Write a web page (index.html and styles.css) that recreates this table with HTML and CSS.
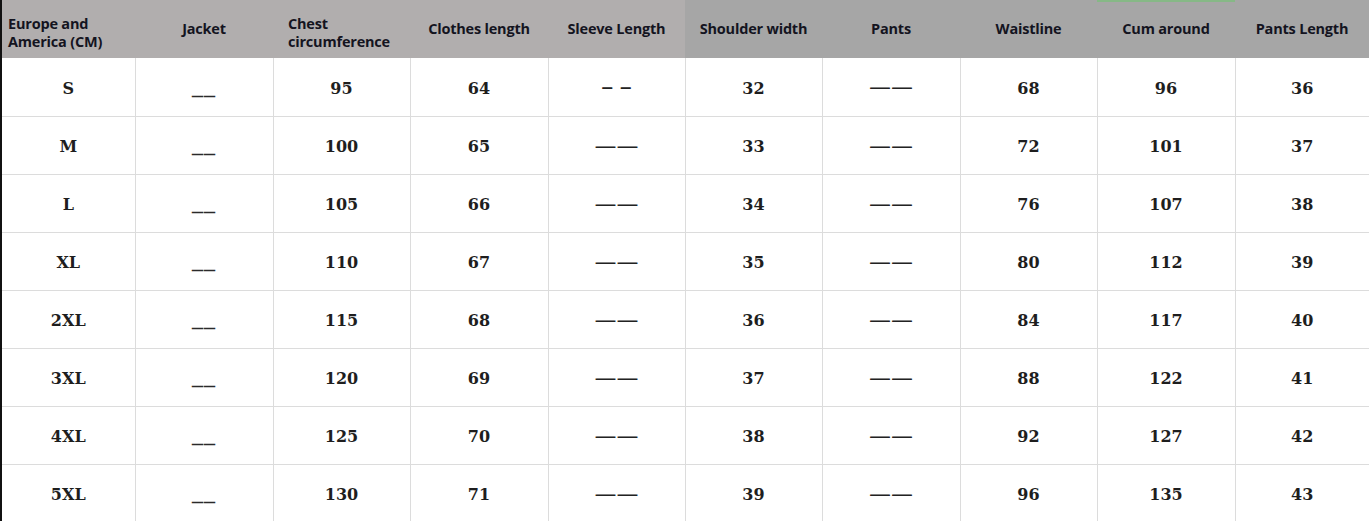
FILE: index.html
```html
<!DOCTYPE html>
<html>
<head>
<meta charset="utf-8">
<link rel="stylesheet" href="styles.css">
</head>
<body>
<div class="sheet">
<table class="size">
<colgroup>
<col class="c1"><col class="c2"><col class="c3"><col class="c4"><col class="c5"><col class="c6"><col class="c7"><col class="c8"><col class="c9"><col class="c10">
</colgroup>
<thead>
<tr>
<th class="left">Europe and<br>America (CM)</th>
<th>Jacket</th>
<th class="left chest">Chest<br>circumference</th>
<th>Clothes length</th>
<th>Sleeve Length</th>
<th class="dark">Shoulder width</th>
<th class="dark">Pants</th>
<th class="dark">Waistline</th>
<th class="dark green">Cum around</th>
<th class="dark">Pants Length</th>
</tr>
</thead>
<tbody>
<tr><td>S</td><td class="us">__</td><td>95</td><td>64</td><td class="dash short">––</td><td>32</td><td class="dash">——</td><td>68</td><td>96</td><td>36</td></tr>
<tr><td>M</td><td class="us">__</td><td>100</td><td>65</td><td class="dash">——</td><td>33</td><td class="dash">——</td><td>72</td><td>101</td><td>37</td></tr>
<tr><td>L</td><td class="us">__</td><td>105</td><td>66</td><td class="dash">——</td><td>34</td><td class="dash">——</td><td>76</td><td>107</td><td>38</td></tr>
<tr><td>XL</td><td class="us">__</td><td>110</td><td>67</td><td class="dash">——</td><td>35</td><td class="dash">——</td><td>80</td><td>112</td><td>39</td></tr>
<tr><td>2XL</td><td class="us">__</td><td>115</td><td>68</td><td class="dash">——</td><td>36</td><td class="dash">——</td><td>84</td><td>117</td><td>40</td></tr>
<tr><td>3XL</td><td class="us">__</td><td>120</td><td>69</td><td class="dash">——</td><td>37</td><td class="dash">——</td><td>88</td><td>122</td><td>41</td></tr>
<tr><td>4XL</td><td class="us">__</td><td>125</td><td>70</td><td class="dash">——</td><td>38</td><td class="dash">——</td><td>92</td><td>127</td><td>42</td></tr>
<tr><td>5XL</td><td class="us">__</td><td>130</td><td>71</td><td class="dash">——</td><td>39</td><td class="dash">——</td><td>96</td><td>135</td><td>43</td></tr>
</tbody>
</table>
</div>
</body>
</html>
```

FILE: styles.css
```css
html, body {
  margin: 0;
  padding: 0;
  background: #ffffff;
}
.sheet {
  width: 1369px;
  height: 521px;
  overflow: hidden;
  border-left: 2px solid #111;
  box-sizing: border-box;
}
.size {
  border-collapse: collapse;
  table-layout: fixed;
  width: 1367px;
}
.c1 { width: 133px; }
.c2 { width: 138px; }
.c3 { width: 137px; }
.c4 { width: 138px; }
.c5 { width: 137px; }
.c6 { width: 137px; }
.c7 { width: 138px; }
.c8 { width: 137px; }
.c9 { width: 138px; }
.c10 { width: 134px; }
.size th {
  height: 58px;
  padding: 0;
  background: #b1aeae;
  color: #14141f;
  font-family: "Open Sans", "Liberation Sans", sans-serif;
  font-weight: 700;
  font-size: 14.5px;
  letter-spacing: -0.2px;
  line-height: 18px;
  text-align: center;
  vertical-align: middle;
  border: none;
  box-sizing: border-box;
}
.size th.dark {
  background: #a6a6a6;
}
.size th.green {
  box-shadow: inset 0 2px 0 #86b886;
}
.size th.left {
  text-align: left;
  padding-left: 6px;
  padding-top: 8px;
}
.size th.chest {
  padding-left: 15px;
}
.size td {
  height: 58px;
  padding: 3px 0 0;
  border: 1px solid #dcdcdc;
  border-top: none;
  text-align: center;
  vertical-align: middle;
  font-family: "DejaVu Serif", "Liberation Serif", serif;
  font-weight: bold;
  font-size: 16px;
  color: #1e1e1e;
  box-sizing: border-box;
}
.size td:first-child { border-left: none; }
.size td:last-child { border-right: none; }
.size td.us {
  font-family: "DejaVu Sans", sans-serif;
  font-weight: normal;
  font-size: 22px;
  letter-spacing: 1px;
  padding: 0 0 5px;
  color: #2a2a2a;
}
.size td.dash {
  font-family: "DejaVu Sans", sans-serif;
  font-weight: normal;
  font-size: 22px;
  letter-spacing: 0;
  color: #222;
  padding-top: 0;
}
.size td.short {
  font-size: 25px;
  letter-spacing: 6px;
  text-indent: 6px;
}
```
